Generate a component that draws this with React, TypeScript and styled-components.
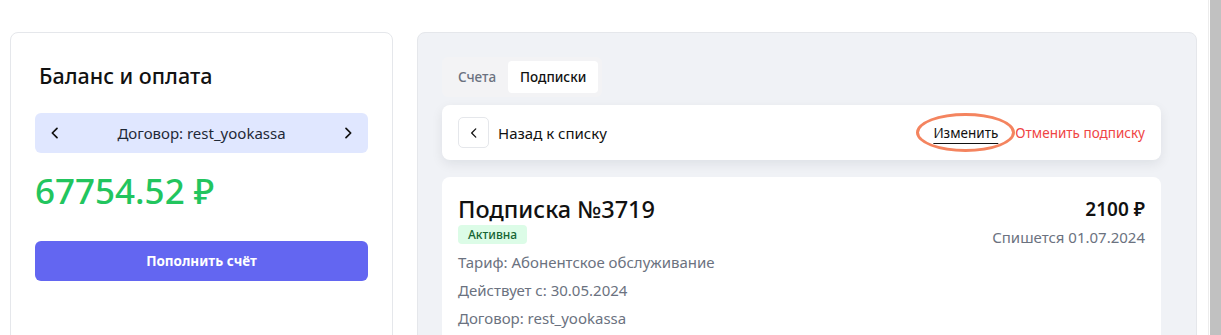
import React from "react";
import styled, { createGlobalStyle } from "styled-components";

const Global = createGlobalStyle`
  html, body { margin: 0; padding: 0; background: #ffffff; }
  body { font-family: "Noto Sans", "Open Sans", sans-serif; color: #111827; overflow: hidden; }
  * { box-sizing: border-box; }
`;

const Page = styled.div`
  display: flex;
  height: 335px;
  overflow: hidden;
`;

const Content = styled.div`
  flex: 1;
  display: flex;
  gap: 24px;
  padding: 32px 11px 0 10px;
  align-items: flex-start;
`;

const ScrollStrip = styled.div`
  width: 13px;
  border-left: 1px solid #ececec;
  padding-left: 1px;
  background: #ffffff;
  display: flex;
`;

const ScrollThumb = styled.div`
  flex: 1;
  background: #c1c1c1;
`;

const BalanceCard = styled.section`
  width: 383px;
  height: 330px;
  flex-shrink: 0;
  background: #ffffff;
  border: 1px solid #e5e7eb;
  border-radius: 8px;
  padding: 24px 24px;
  display: flex;
  flex-direction: column;
`;

const CardTitle = styled.h2`
  margin: 0;
  padding: 3px 4px 0;
  font-size: 21.5px;
  font-weight: 500;
  line-height: 31px;
  color: #111111;
`;

const ContractSwitch = styled.div`
  margin-top: 22px;
  height: 40px;
  background: #e0e7ff;
  border-radius: 6px;
  display: flex;
  align-items: center;
  justify-content: space-between;
  padding: 0 12px;
  font-size: 15px;
  color: #1f2937;
`;

const ArrowBtn = styled.span`
  display: flex;
  width: 16px;
  justify-content: center;
`;

const Amount = styled.div`
  margin-top: 16px;
  font-size: 35px;
  font-weight: 500;
  line-height: 44px;
  color: #22c55e;
`;

const PrimaryButton = styled.button`
  margin-top: 28px;
  height: 40px;
  border: none;
  border-radius: 6px;
  background: #6366f1;
  color: #ffffff;
  font-family: inherit;
  font-size: 13.5px;
  font-weight: 700;
`;

const Panel = styled.section`
  flex: 1;
  height: 330px;
  background: #f0f2f6;
  border: 1px solid #e5e7eb;
  border-radius: 8px;
  padding: 24px 35px 0 24px;
  display: flex;
  flex-direction: column;
`;

const Tabs = styled.div`
  align-self: flex-start;
  display: flex;
  padding: 4px;
  background: #f3f3f5;
  border-radius: 6px;
`;

const Tab = styled.div<{ $active?: boolean }>`
  height: 32px;
  display: flex;
  align-items: center;
  padding: 0 12px;
  border-radius: 4px;
  font-size: 13.5px;
  font-weight: 500;
  background: ${(p) => (p.$active ? "#ffffff" : "transparent")};
  color: ${(p) => (p.$active ? "#111111" : "#6b7280")};
`;

const HeaderCard = styled.div`
  margin-top: 8px;
  height: 55px;
  background: #ffffff;
  border-radius: 8px;
  box-shadow: 0 4px 12px rgba(15, 23, 42, 0.08);
  display: flex;
  align-items: center;
  justify-content: space-between;
  padding: 0 16px;
`;

const BackGroup = styled.div`
  display: flex;
  align-items: center;
  gap: 9px;
  font-size: 15px;
  color: #111111;
`;

const BackButton = styled.span`
  width: 31px;
  height: 31px;
  border: 1px solid #e5e7eb;
  border-radius: 5px;
  display: flex;
  align-items: center;
  justify-content: center;
`;

const Actions = styled.div`
  display: flex;
  align-items: center;
  font-size: 13.5px;
`;

const EditLink = styled.span`
  position: relative;
  color: #111111;
  text-decoration: underline;
  text-underline-offset: 5px;
  margin-right: 17px;
`;

const Highlight = styled.span`
  position: absolute;
  left: -17px;
  right: -17px;
  top: -11px;
  bottom: -10px;
  border: 3px solid #f4845f;
  border-radius: 50%;
  pointer-events: none;
`;

const CancelLink = styled.span`
  color: #ef4444;
`;

const DetailCard = styled.div`
  margin-top: 17px;
  flex: 1;
  background: #ffffff;
  border-radius: 8px;
  padding: 16px;
  display: flex;
  justify-content: space-between;
  align-items: flex-start;
`;

const DetailMain = styled.div`
  display: flex;
  flex-direction: column;
`;

const SubTitle = styled.h3`
  margin: 0;
  font-size: 23.5px;
  font-weight: 500;
  line-height: 32px;
  color: #111111;
`;

const Badge = styled.span`
  align-self: flex-start;
  height: 19px;
  padding: 0 10px;
  display: flex;
  align-items: center;
  font-size: 12px;
  font-weight: 500;
  background: #dcfce7;
  color: #166534;
  border-radius: 4px;
`;

const InfoLine = styled.div`
  font-size: 15px;
  line-height: 28px;
  color: #6b7280;
  &:first-of-type { margin-top: 4px; }
`;

const DetailSide = styled.div`
  display: flex;
  flex-direction: column;
  align-items: flex-end;
`;

const Price = styled.div`
  margin-top: 3px;
  font-size: 19px;
  font-weight: 600;
  line-height: 26px;
  color: #111111;
`;

const Due = styled.div`
  margin-top: 4px;
  font-size: 15px;
  line-height: 22px;
  color: #6b7280;
`;

const Chevron = ({ dir, size, stroke }: { dir: "left" | "right"; size: number; stroke: number }) => (
  <svg width={size} height={size} viewBox="0 0 24 24" fill="none" stroke="#111111" strokeWidth={stroke} strokeLinecap="round" strokeLinejoin="round">
    {dir === "left" ? <polyline points="15 5 8 12 15 19" /> : <polyline points="9 5 16 12 9 19" />}
  </svg>
);

export default function App() {
  return (
    <>
      <Global />
      <Page>
        <Content>
          <BalanceCard>
            <CardTitle>Баланс и оплата</CardTitle>
            <ContractSwitch>
              <ArrowBtn><Chevron dir="left" size={20} stroke={2.6} /></ArrowBtn>
              <span>Договор: rest_yookassa</span>
              <ArrowBtn><Chevron dir="right" size={20} stroke={2.6} /></ArrowBtn>
            </ContractSwitch>
            <Amount>67754.52 ₽</Amount>
            <PrimaryButton>Пополнить счёт</PrimaryButton>
          </BalanceCard>
          <Panel>
            <Tabs>
              <Tab>Счета</Tab>
              <Tab $active>Подписки</Tab>
            </Tabs>
            <HeaderCard>
              <BackGroup>
                <BackButton><Chevron dir="left" size={14} stroke={2.2} /></BackButton>
                <span>Назад к списку</span>
              </BackGroup>
              <Actions>
                <EditLink>
                  Изменить
                  <Highlight />
                </EditLink>
                <CancelLink>Отменить подписку</CancelLink>
              </Actions>
            </HeaderCard>
            <DetailCard>
              <DetailMain>
                <SubTitle>Подписка №3719</SubTitle>
                <Badge>Активна</Badge>
                <InfoLine>Тариф: Абонентское обслуживание</InfoLine>
                <InfoLine>Действует с: 30.05.2024</InfoLine>
                <InfoLine>Договор: rest_yookassa</InfoLine>
              </DetailMain>
              <DetailSide>
                <Price>2100 ₽</Price>
                <Due>Спишется 01.07.2024</Due>
              </DetailSide>
            </DetailCard>
          </Panel>
        </Content>
        <ScrollStrip><ScrollThumb /></ScrollStrip>
      </Page>
    </>
  );
}
